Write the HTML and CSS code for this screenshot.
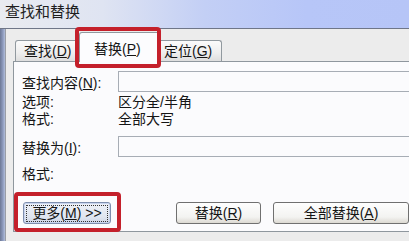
FILE: index.html
```html
<!DOCTYPE html>
<html lang="zh-CN">
<head>
    <meta charset="UTF-8">
    <title>查找和替换</title>
    <link rel="stylesheet" href="styles.css">
</head>
<body>

<div class="dialog">
    <div class="titlebar">查找和替换</div>
    <div class="frame">
        <div class="frame-edge"></div>
        <div class="client">
            <div class="tabs">
                <div class="tab first">查找(<u>D</u>)</div>
                <div class="tab active">替换(<u>P</u>)</div>
                <div class="tab last">定位(<u>G</u>)</div>
            </div>
            <div class="panel">
                <div class="field">
                    <span class="label">查找内容(<u>N</u>):</span>
                    <div class="input"></div>
                </div>
                <div class="info first-info">
                    <span class="label">选项:</span>
                    <span>区分全/半角</span>
                </div>
                <div class="info">
                    <span class="label">格式:</span>
                    <span>全部大写</span>
                </div>
                <div class="field replace">
                    <span class="label">替换为(<u>I</u>):</span>
                    <div class="input"></div>
                </div>
                <div class="info format2">
                    <span class="label">格式:</span>
                </div>
                <div class="buttons">
                    <button class="btn more"><span class="focus">更多(<u>M</u>) &gt;&gt;</span></button>
                    <button class="btn replace-btn">替换(<u>R</u>)</button>
                    <button class="btn wide">全部替换(<u>A</u>)</button>
                </div>
            </div>
        </div>
    </div>

    <!-- red highlight marks -->
    <div class="mark mark-tab"></div>
    <div class="mark mark-more"></div>
</div>

</body>
</html>
```

FILE: styles.css
```css
body {
    margin: 0;
    padding: 0;
    width: 409px;
    height: 241px;
    overflow: hidden;
    font-family: "Liberation Sans", "Noto Sans CJK SC", sans-serif;
    font-size: 14px;
    color: #151515;
    background: #ececec;
}

.dialog {
    position: relative;
    width: 409px;
    height: 241px;
    overflow: hidden;
}

.titlebar {
    height: 28px;
    line-height: 24px;
    padding-left: 5px;
    font-size: 15px;
    color: #1e1e1e;
    background: linear-gradient(to right, #e9ebf0 0%, #dfe4f2 25%, #c3cff5 50%, #b7c6f8 75%, #b6c5f7 100%);
    border-bottom: 1px solid #6f7688;
}

.frame {
    display: flex;
    height: 212px;
}

.frame-edge {
    width: 5px;
    background: linear-gradient(to right, #6d7896, #8f9cbf 60%, #b3bfdc);
}

.client {
    flex: 1;
    border-left: 1px solid #9a9ea6;
    padding: 4px 0 0 7px;
    background: #ececec;
}

.tabs {
    display: flex;
    align-items: flex-end;
    padding-left: 2px;
    height: 29px;
    margin-bottom: -1px;
    position: relative;
    z-index: 1;
}

.tab {
    height: 20px;
    line-height: 20px;
    margin-bottom: 1px;
    padding: 0 7px 0 8px;
    border: 1px solid #91999f;
    border-bottom: none;
    border-radius: 3px 3px 0 0;
    background: linear-gradient(#fbfbfb, #eeeeee 60%, #dedede);
    white-space: nowrap;
}

.tab.first {
    width: 48px;
}

.tab.active {
    height: 29px;
    line-height: 32px;
    margin: 0 -2px 0 -1px;
    padding: 0 14px 0 14px;
    width: 51px;
    background: #fcfcfe;
    position: relative;
    z-index: 2;
}

.tab.last {
    padding: 0 10px 0 5px;
    width: 47px;
}

.panel {
    margin-right: -10px;
    border: 1px solid #8f979e;
    background: #fbfbfd;
    padding: 9px 0 7px 8px;
}

.field, .info {
    display: grid;
    grid-template-columns: 96px 1fr;
    align-items: center;
}

.label {
    white-space: nowrap;
}

.input {
    height: 19px;
    border: 1px solid #a7adb5;
    background: #fbfbfd;
}

.info {
    height: 17px;
    line-height: 17px;
}

.first-info {
    margin-top: 2px;
}

.replace {
    margin-top: 8px;
}

.format2 {
    margin-top: 9px;
}

.buttons {
    display: flex;
    margin-top: 19px;
}

.btn {
    height: 22px;
    padding: 0;
    font-family: inherit;
    font-size: 14px;
    line-height: 18px;
    color: #151515;
    border: 1px solid #707070;
    border-radius: 3px;
    background: linear-gradient(#fefefe, #f3f3f1 70%, #dcd9d2);
}

.btn.more {
    margin-left: 1px;
    width: 88px;
    border-color: #7f8fae;
    background: linear-gradient(#eef1f8, #dfe5f0 70%, #cdd5e6);
    box-shadow: inset 0 0 0 1px #c9d5ef;
}

.btn.more .focus {
    display: block;
    margin: 2px 3px;
    line-height: 15px;
    outline: 1px dotted #333;
}

.replace-btn {
    margin-left: 65px;
    width: 85px;
}

.btn.wide {
    margin-left: 12px;
    width: 136px;
}

.mark {
    position: absolute;
    border: 4px solid #c4202b;
    border-radius: 4px;
    z-index: 5;
}

.mark-tab {
    left: 75px;
    top: 27px;
    width: 78px;
    height: 33px;
}

.mark-more {
    left: 14px;
    top: 192px;
    width: 99px;
    height: 32px;
}
```
